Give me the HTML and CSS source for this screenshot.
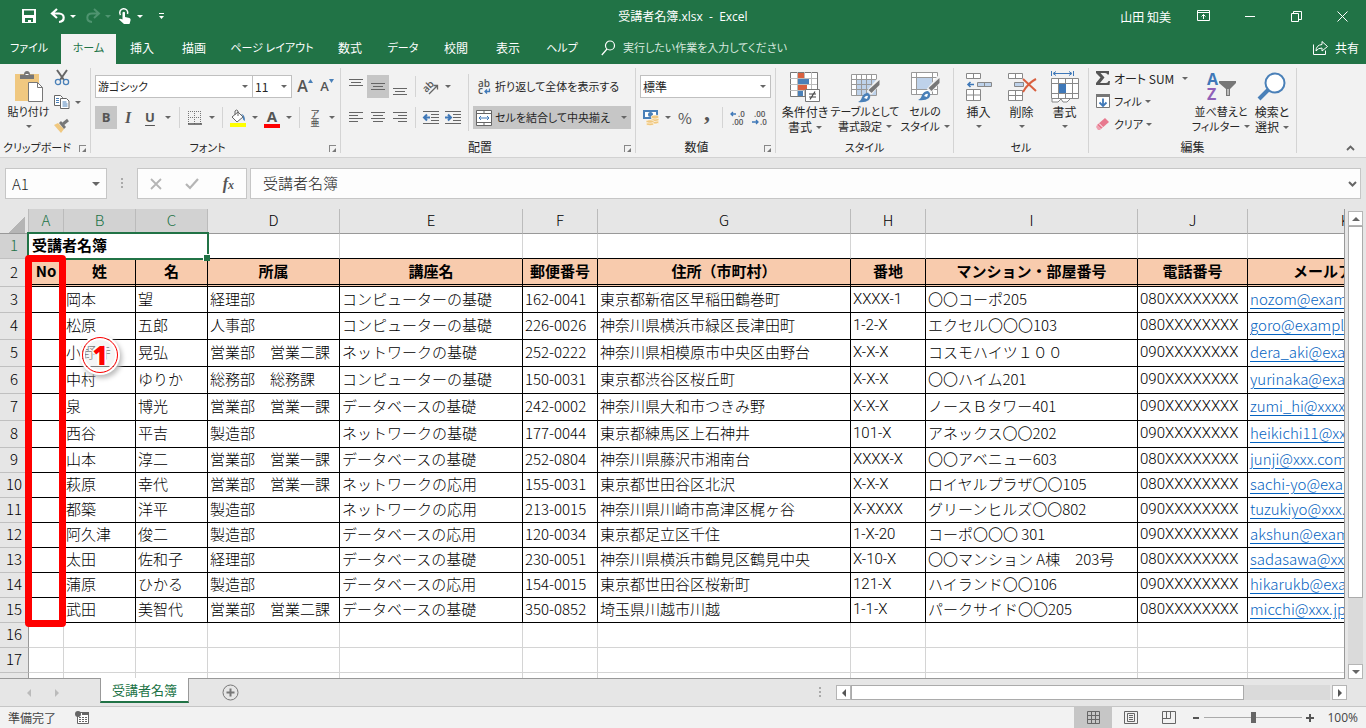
FILE: index.html
```
<!DOCTYPE html>
<html lang="ja">
<head>
<meta charset="utf-8">
<title>受講者名簿.xlsx - Excel</title>
<link rel="stylesheet" href="styles.css">
</head>
<body>
<div class="app">
<header class="titlebar">
  <div class="quick">
    <button class="q-save" aria-label="上書き保存"><svg width="16" height="16" viewBox="0 0 16 16"><path d="M1 1h14v14H1z" fill="#fff"/><path d="M3 2.500h10V7H3zM4 10h8v4h-2v-2H7v2H4z" fill="#217346"/></svg></button>
    <button class="q-undo" aria-label="元に戻す"><svg width="16" height="16" viewBox="0 0 16 16"><path d="M7 1L2 5.500l5 4.500M2.500 5.500H9c6 0 6.500 8 0 8.500" fill="none" stroke="#fff" stroke-width="2.200"/></svg></button>
    <span class="caret white"></span>
    <button class="q-redo" aria-label="やり直し"><svg width="16" height="16" viewBox="0 0 16 16"><path d="M9 1l5 4.500L9 10M13.500 5.500H7c-6 0-6.500 8 0 8.500" fill="none" stroke="#4f9470" stroke-width="2"/></svg></button>
    <span class="caret faded"></span>
    <button class="q-touch" aria-label="タッチ/マウス モードの切り替え"><svg width="14" height="18" viewBox="0 0 14 18"><path d="M2.500 8a4 4 0 1 1 7-1" fill="none" stroke="#fff" stroke-width="1.500"/><path d="M4.500 5.500q1.500-1.500 2.500 0V10l4.500 1q1.500.5 1 2.500l-1 3.500H6L1 12.500q.5-1.500 3.500 0z" fill="#fff"/></svg></button>
    <span class="caret white"></span>
    <button class="q-more" aria-label="クイック アクセス ツール バーのユーザー設定"><svg width="7" height="8" viewBox="0 0 7 8"><path d="M1 1.500h5" stroke="#fff"/><path d="M1 4h5L3.500 7z" fill="#fff"/></svg></button>
  </div>
  <div class="doc-title">受講者名簿.xlsx&nbsp; -&nbsp; Excel</div>
  <div class="window">
    <span class="user">山田 知美</span>
    <button aria-label="リボンの表示オプション"><svg width="14" height="12" viewBox="0 0 14 12" fill="none" stroke="#fff"><path d="M.5.5h12v10H.5zM.5 2.500h12M6.500 9V4.500M4.500 6.500l2-2 2 2"/></svg></button>
    <button aria-label="最小化"><svg width="11" height="11" viewBox="0 0 11 11"><path d="M0 5.500h10" stroke="#fff"/></svg></button>
    <button aria-label="元に戻す (縮小)"><svg width="11" height="11" viewBox="0 0 11 11" fill="none" stroke="#fff"><path d="M.5 2.500h7v8h-7zM2.500 2.500v-2h8v8h-3"/></svg></button>
    <button aria-label="閉じる"><svg width="11" height="11" viewBox="0 0 11 11"><path d="M.5.5l10 10M10.500.5l-10 10" stroke="#fff"/></svg></button>
  </div>
</header>

<nav class="tabs">
  <button class="t-file kana">ファイル</button><button class="active kana">ホーム</button><button>挿入</button><button>描画</button><button class="t-page kana">ページ レイアウト</button><button>数式</button><button class="t-data kana">データ</button><button>校閲</button><button>表示</button><button class="t-help kana">ヘルプ</button>
  <button class="tell kana"><svg width="15" height="16" viewBox="0 0 15 16" fill="none" stroke="#fff" stroke-width="1.200"><circle cx="9" cy="5.500" r="4.500"/><path d="M6 9L.8 15"/></svg>実行したい作業を入力してください</button>
  <button class="share"><svg width="16" height="15" viewBox="0 0 16 15" fill="none" stroke="#fff"><path d="M.5 4.500v10h12v-4M3 11q0-6 6-6.500v-3l5.500 5L9 11V8Q5 8 3 11z"/></svg>共有</button>
</nav>

<section class="ribbon">
  <div class="group g-clip">
    <div class="body">
      <button class="big paste"><svg width="30" height="32" viewBox="0 0 30 32"><path d="M1 3h24v27H1z" fill="#f0c880"/><path d="M6 8V3.500h4Q10 0 13 0t3 3.500h4V8z" fill="#777"/><path d="M11.500 3.500h3" stroke="#fff"/><path d="M14.500 11.500h9l5 5v14h-14z" fill="#fff" stroke="#777"/><path d="M23.500 11.500v5h5" fill="none" stroke="#777"/></svg><span class="kana">貼り付け</span><i class="caret"></i></button>
      <div class="clip-tools">
        <button aria-label="切り取り"><svg width="16" height="16" viewBox="0 0 16 16" fill="none"><path d="M3 0l7 10M13 0L6 10" stroke="#666" stroke-width="2"/><circle cx="4" cy="12" r="2.600" stroke="#4a80b8" stroke-width="1.300"/><circle cx="12" cy="12" r="2.600" stroke="#4a80b8" stroke-width="1.300"/></svg></button>
        <div class="copy-row"><button aria-label="コピー"><svg width="16" height="14" viewBox="0 0 16 14" fill="#fff" stroke="#666"><path d="M.5.5h6l2 2v8h-8z"/><path d="M6.500 3.500h6l2.500 2.500v7.500H6.500z"/><path d="M2 3.500h3M2 5.500h3M2 7.500h3M8.500 7h4M8.500 9h5M8.500 11h5" stroke="#4a80b8"/></svg></button><i class="caret"></i></div>
        <button aria-label="書式のコピー/貼り付け"><svg width="16" height="14" viewBox="0 0 16 14"><path d="M0 6l4-2 6 6-3 4z" fill="#f0c880"/><path d="M5 4l5 6 2-2-5-6z" fill="#777"/><path d="M9 5l5-4" stroke="#777" stroke-width="3"/></svg></button>
      </div>
    </div>
    <div class="caption kana">クリップボード<span class="launch"></span></div>
  </div>

  <div class="group g-font">
    <div class="body rows">
      <div class="row">
        <div class="combo font-name kana"><select aria-label="フォント"><option>游ゴシック</option></select></div><div class="combo font-size"><select aria-label="フォント サイズ"><option>11</option></select></div>
        <button class="w22 letter grow" aria-label="フォント サイズの拡大">A<svg width="5" height="4" viewBox="0 0 5 4"><path d="M0 4h5L2.500 0z" fill="#4a80b8"/></svg></button><button class="w22 letter shrink" aria-label="フォント サイズの縮小">A<svg width="5" height="4" viewBox="0 0 5 4"><path d="M0 0h5L2.500 4z" fill="#4a80b8"/></svg></button>
      </div>
      <div class="row">
        <button class="w22 on letter">B</button><button class="w22 letter italic">I</button><button class="w22 letter under">U</button><span class="cw first"><i class="caret"></i></span>
        <i class="sep"></i>
        <button class="w22" aria-label="罫線"><svg width="14" height="14" viewBox="0 0 14 14" fill="none" stroke="#777"><path d="M.5 0v13M6.500 0v13M12.500 0v13M0 .5h13M0 6.500h13" stroke-dasharray="1 1"/><path d="M0 13h14" stroke="#555" stroke-width="1.500"/></svg></button><span class="cw"><i class="caret"></i></span>
        <i class="sep"></i>
        <button class="w22" aria-label="塗りつぶしの色"><svg width="18" height="18" viewBox="0 0 18 18"><path d="M3 8l6-5 5 5-6 5z" fill="#fff" stroke="#666"/><path d="M6 6V2q1.500-2 3 0v5" fill="none" stroke="#666"/><path d="M12 5q4 0 4 7-3-1-2-5z" fill="#4a80b8"/><path d="M1 14h16v4H1z" fill="#ff0"/></svg></button><span class="cw"><i class="caret"></i></span>
        <button class="w22 font-color letter" aria-label="フォントの色">A</button><span class="cw"><i class="caret"></i></span>
        <i class="sep"></i>
        <button class="w22 ruby"><span>ア</span><span>亜</span></button><span class="cw"><i class="caret"></i></span>
      </div>
    </div>
    <div class="caption kana">フォント<span class="launch"></span></div>
  </div>

  <div class="group g-align">
    <div class="body">
      <div class="rows">
        <div class="row">
          <button class="w22" aria-label="上揃え"><svg width="14" height="16" viewBox="0 0 14 16" stroke="#666"><path d="M0 .5h14M2 3.500h10M0 6.500h14"/></svg></button><button class="w22 on" aria-label="上下中央揃え"><svg width="14" height="16" viewBox="0 0 14 16" stroke="#666"><path d="M0 4.500h14M2 7.500h10M0 10.500h14"/></svg></button><button class="w22" aria-label="下揃え"><svg width="14" height="16" viewBox="0 0 14 16" stroke="#666"><path d="M0 9.500h14M2 12.500h10M0 15.500h14"/></svg></button>
          <i class="sep"></i>
          <button class="w22" aria-label="方向"><svg width="18" height="16" viewBox="0 0 18 16"><text x="0" y="10" transform="rotate(-45 7 7)" class="glyph">ab</text><path d="M7 15l8-8M11.500 6.500h4v4" fill="none" stroke="#666" stroke-width="1.300"/></svg></button><span class="cw"><i class="caret"></i></span>
        </div>
        <div class="row">
          <button class="w22" aria-label="左揃え"><svg width="14" height="12" viewBox="0 0 14 12" stroke="#666"><path d="M0 .5h14M0 3.500h9M0 6.500h14M0 9.500h9"/></svg></button><button class="w22" aria-label="中央揃え"><svg width="14" height="12" viewBox="0 0 14 12" stroke="#666"><path d="M0 .5h14M2 3.500h10M0 6.500h14M2 9.500h10"/></svg></button><button class="w22" aria-label="右揃え"><svg width="14" height="12" viewBox="0 0 14 12" stroke="#666"><path d="M0 .5h14M5 3.500h9M0 6.500h14M5 9.500h9"/></svg></button>
          <i class="sep"></i>
          <button class="w22" aria-label="インデントを減らす"><svg width="16" height="14" viewBox="0 0 16 14" fill="none" stroke="#666"><path d="M0 .5h16M8 3.500h8M8 6.500h8M8 9.500h8M0 12.500h16"/><path d="M7 6.500H1M4 3.500l-3 3 3 3" stroke="#3f78b8" stroke-width="2"/></svg></button><button class="w22" aria-label="インデントを増やす"><svg width="16" height="14" viewBox="0 0 16 14" fill="none" stroke="#666"><path d="M0 .5h16M8 3.500h8M8 6.500h8M8 9.500h8M0 12.500h16"/><path d="M0 6.500h6M3 3.500l3 3-3 3" stroke="#3f78b8" stroke-width="2"/></svg></button>
        </div>
      </div>
      <i class="sep tall"></i>
      <div class="rows wide">
        <button class="row text-btn kana"><svg width="16" height="16" viewBox="0 0 16 16"><text x="2" y="8" class="glyph">ab</text><text x="2" y="15" class="glyph">c</text><path d="M13.500 9.500v3H9M11 10.500l-2 2 2 2" fill="none" stroke="#3f78b8" stroke-width="1.300"/></svg>折り返して全体を表示する</button>
        <button class="row text-btn kana on"><svg width="16" height="16" viewBox="0 0 16 16" fill="#fff" stroke="#666"><path d="M.5.5h15v15H.5zM8 .5v3M8 12.500v3M.5 3.500h15M.5 12.500h15"/><path d="M3 8h10M5 6L3 8l2 2M11 6l2 2-2 2" fill="none" stroke="#3f78b8"/></svg>セルを結合して中央揃え<i class="caret"></i></button>
      </div>
    </div>
    <div class="caption">配置<span class="launch"></span></div>
  </div>

  <div class="group g-num">
    <div class="body rows">
      <div class="combo number-format"><select aria-label="表示形式"><option>標準</option></select></div>
      <div class="row">
        <button class="w22" aria-label="通貨表示形式"><svg width="18" height="17" viewBox="0 0 18 17"><path d="M1 1h15v9H1z" fill="#4a80b8"/><path d="M3 3h11v5H3z" fill="#fff"/><circle cx="8.500" cy="5.500" r="2.500" fill="#4a80b8"/><g fill="#f0c880" stroke="#fff" stroke-width=".6"><ellipse cx="13" cy="13" rx="4" ry="2"/><ellipse cx="13" cy="10.500" rx="4" ry="2"/><ellipse cx="13" cy="8" rx="4" ry="2"/><ellipse cx="8" cy="15" rx="4" ry="1.700"/><ellipse cx="8" cy="12.500" rx="4" ry="1.700"/></g></svg></button><span class="cw"><i class="caret"></i></span><button class="w22 pct">%</button><button class="w22 comma">,</button>
        <i class="sep"></i>
        <button class="w22" aria-label="小数点以下の表示桁数を増やす"><svg width="16" height="16" viewBox="0 0 16 16"><text x="8" y="7" class="dec">.0</text><text x="2" y="15" class="dec">.00</text><path d="M6 4H1M3 2L1 4l2 2" fill="none" stroke="#3f78b8" stroke-width="1.300"/></svg></button><button class="w22" aria-label="小数点以下の表示桁数を減らす"><svg width="16" height="16" viewBox="0 0 16 16"><text x="2" y="7" class="dec">.00</text><text x="8" y="15" class="dec">.0</text><path d="M0 12h6M4 10l2 2-2 2" fill="none" stroke="#3f78b8" stroke-width="1.300"/></svg></button>
      </div>
    </div>
    <div class="caption">数値<span class="launch"></span></div>
  </div>

  <div class="group g-style">
    <div class="body">
      <button class="big"><svg width="32" height="32" viewBox="0 0 32 32"><path d="M1.500 1.500h27v24h-27z" fill="#fff" stroke="#777"/><path d="M8.500 1v24M15.500 1v24M22.500 1v24M1 7.500h27M1 13.500h27M1 19.500h27" stroke="#bbb"/><path d="M9 2h6v5H9zM9 14h9v5H9z" fill="#d9603f"/><path d="M9 8h11v5H9zM9 20h5v5H9z" fill="#4a80b8"/><path d="M16.500 18.500h14v12h-14z" fill="#fff" stroke="#777"/><path d="M20 23h7M20 26h7M26 20.500l-5 8" stroke="#444" stroke-width="1.200"/></svg><span>条件付き<br>書式<i class="caret"></i></span></button>
      <button class="big b64"><svg width="32" height="32" viewBox="0 0 32 32"><path d="M2.500 3.500h25v21h-25z" fill="#fff"/><path d="M8 9h19v15H8z" fill="#bed2ea"/><path d="M2.500 3.500h25v21h-25zM7.500 3v22M12.500 3v22M17.500 3v22M22.500 3v22M2 8.500h26M2 13.500h26M2 18.500h26" fill="none" stroke="#999"/><path d="M31 9L20 22" stroke="#f2f2f2" stroke-width="6"/><path d="M30.500 9v5l-8 8-3-3z" fill="#777"/><path d="M9 31q3-1 4-5 2-4 6-4 4 3 1 7-4 3-11 2z" fill="#4a80b8"/><path d="M15 27q2-3 4-2l-1 3z" fill="#fff"/></svg><span class="kana">テーブルとして<br>書式設定<i class="caret"></i></span></button>
      <button class="big"><svg width="32" height="32" viewBox="0 0 32 32"><path d="M2.500 1.500h26v22h-26z" fill="#fff"/><path d="M8 7h15v11H8z" fill="#bed2ea"/><path d="M2.500 1.500h26v22h-26zM7.500 1v22M23.500 1v22M2 6.500h27M2 18.500h27" fill="none" stroke="#999"/><path d="M31 7L20 20" stroke="#f2f2f2" stroke-width="6"/><path d="M30.500 7v5l-8 8-3-3z" fill="#777"/><path d="M9 29q3-1 4-5 2-4 6-4 4 3 1 7-4 3-11 2z" fill="#4a80b8"/><path d="M15 25q2-3 4-2l-1 3z" fill="#fff"/></svg><span class="kana">セルの<br>スタイル<i class="caret"></i></span></button>
    </div>
    <div class="caption kana">スタイル</div>
  </div>

  <div class="group g-cell">
    <div class="body">
      <button class="big"><svg width="28" height="32" viewBox="0 0 28 32" fill="#fff" stroke="#888"><path d="M1.500 2.500h14v5h-14zM8.500 2.500v5M1.500 18.500h14v11h-14zM8.500 18.500v11M1.500 24h14"/><path d="M12.500 11.500h14v4h-14zM19.500 11.500v4" fill="#bed2ea"/><path d="M9 13.500H3M5.500 11L3 13.500 5.500 16" fill="none" stroke="#3f78b8" stroke-width="1.600"/></svg><span>挿入</span><i class="caret"></i></button>
      <button class="big"><svg width="30" height="32" viewBox="0 0 30 32" fill="#fff" stroke="#888"><path d="M1.500 2.500h14v5h-14zM8.500 2.500v5M1.500 19.500h14v10h-14zM8.500 19.500v10M1.500 24.500h14"/><path d="M7.500 11.500h9v4h-9z" fill="#bed2ea"/><path d="M16 8l13 12M29 8Q21 12 16 21" fill="none" stroke="#d9603f" stroke-width="2"/></svg><span>削除</span><i class="caret"></i></button>
      <button class="big"><svg width="28" height="32" viewBox="0 0 28 32" fill="#fff" stroke="#888"><path d="M.5 7.500h27v20h-27zM7.500 7.500v20M14.500 7.500v20M21.500 7.500v20M.5 12.500h27M.5 22.500h27"/><path d="M1 28v3h6l3-3 2 3h4l3-3"/><path d="M8 13h7v9H8z" fill="#3f78b8" stroke="none"/><path d="M.5 0v5M22.500 0v5M3 2.500h17M5 .5l-3 2 3 2M18 .5l3 2-3 2" fill="none" stroke="#3f78b8"/></svg><span>書式</span><i class="caret"></i></button>
    </div>
    <div class="caption kana">セル</div>
  </div>

  <div class="group g-edit">
    <div class="body">
      <div class="edit-tools">
        <button><svg width="16" height="16" viewBox="0 0 16 16"><path d="M1 1h13v3.500h-1.500Q12 3 10 3H5.500l4 4.500L5 13h6q2 0 2.500-2H15l-.5 4H1v-2l4.500-5.500L1 3z" fill="#555"/></svg>オート SUM<i class="caret sum"></i></button>
        <button class="kana"><svg width="16" height="16" viewBox="0 0 16 16"><path d="M1.500 1.500h13v13h-13z" fill="#fff" stroke="#777"/><path d="M1 1h14v3H1z" fill="#777"/><path d="M8 5.500v7M4.500 9.500L8 13l3.500-3.500" fill="none" stroke="#3f78b8" stroke-width="1.800"/></svg>フィル<i class="caret"></i></button>
        <button class="kana"><svg width="16" height="16" viewBox="0 0 16 16"><path d="M2 9l8-7 4 4-8 7z" fill="#e8788e"/><path d="M2 9l4 4-1 1H3L1 11z" fill="#f0a0b0"/><path d="M4 7.500l4 4" stroke="#fff"/></svg>クリア<i class="caret"></i></button>
      </div>
      <button class="big"><svg width="32" height="32" viewBox="0 0 32 32"><text x="2" y="14" class="az a">A</text><text x="2" y="29" class="az z">Z</text><path d="M14 10h17v2l-6 6v7h-4v-7l-7-6z" fill="#777"/><path d="M23 18v6" stroke="#fff"/></svg><span class="kana">並べ替えと<br>フィルター<i class="caret"></i></span></button>
      <button class="big find"><svg width="32" height="32" viewBox="0 0 32 32"><path d="M13 18L3 28" stroke="#4a80b8" stroke-width="4"/><circle cx="19" cy="12" r="9.500" fill="#fff" stroke="#4a80b8" stroke-width="2"/></svg><span>検索と<br>選択<i class="caret"></i></span></button>
    </div>
    <div class="caption">編集</div>
  </div>
  <button class="collapse" aria-label="リボンを折りたたむ"><svg width="9" height="6" viewBox="0 0 9 6"><path d="M1 5l3.500-3.500L8 5" fill="none" stroke="#666" stroke-width="1.800"/></svg></button>
</section>

<section class="formula">
  <div class="namebox"><input aria-label="名前ボックス" value="A1"><i class="caret"></i></div>
  <span class="dots"></span>
  <div class="fx">
    <button aria-label="キャンセル"><svg width="12" height="12" viewBox="0 0 12 12"><path d="M1 1l10 10M11 1L1 11" stroke="#b5b5b5" stroke-width="1.800"/></svg></button>
    <button aria-label="入力"><svg width="14" height="12" viewBox="0 0 14 12"><path d="M1 6l4 4 8-9" fill="none" stroke="#b5b5b5" stroke-width="2.200"/></svg></button>
    <button class="fn" aria-label="関数の挿入">f<small>x</small></button>
  </div>
  <div class="entry"><input aria-label="数式バー" value="受講者名簿"><svg width="9" height="6" viewBox="0 0 9 6"><path d="M1 1l3.500 3.500L8 1" fill="none" stroke="#666" stroke-width="2"/></svg></div>
</section>

<main class="sheet">
  <div class="view">
    <table>
      <colgroup><col class="c-rh"><col class="c-a"><col class="c-b"><col class="c-b"><col class="c-d"><col class="c-e"><col class="c-f"><col class="c-g"><col class="c-f"><col class="c-i"><col class="c-j"><col class="c-k"></colgroup>
      <thead><tr><th class="corner"></th><th class="sel">A</th><th class="sel">B</th><th class="sel">C</th><th>D</th><th>E</th><th>F</th><th>G</th><th>H</th><th>I</th><th>J</th><th>K</th></tr></thead>
      <tbody>
        <tr class="r1"><th class="sel">1</th><td colspan="3">受講者名簿</td><td></td><td></td><td></td><td></td><td></td><td></td><td></td><td></td></tr>
        <tr class="head"><th>2</th><td>No</td><td>姓</td><td>名</td><td>所属</td><td>講座名</td><td>郵便番号</td><td>住所（市町村）</td><td>番地</td><td>マンション・部屋番号</td><td>電話番号</td><td>メールアドレス</td></tr>
        <tr class="data first"><th>3</th><td></td><td>岡本</td><td>望</td><td>経理部</td><td>コンピューターの基礎</td><td>162-0041</td><td>東京都新宿区早稲田鶴巻町</td><td>XXXX-1</td><td>〇〇コーポ205</td><td>080XXXXXXXX</td><td><a href="#">nozom@example.com</a></td></tr>
        <tr class="data tall"><th>4</th><td></td><td>松原</td><td>五郎</td><td>人事部</td><td>コンピューターの基礎</td><td>226-0026</td><td>神奈川県横浜市緑区長津田町</td><td>1-2-X</td><td>エクセル〇〇〇103</td><td>080XXXXXXXX</td><td><a href="#">goro@example.com</a></td></tr>
        <tr class="data tall"><th>5</th><td></td><td>小野寺</td><td>晃弘</td><td>営業部　営業二課</td><td>ネットワークの基礎</td><td>252-0222</td><td>神奈川県相模原市中央区由野台</td><td>X-X-X</td><td>コスモハイツ１００</td><td>090XXXXXXXX</td><td><a href="#">dera_aki@example.com</a></td></tr>
        <tr class="data tall"><th>6</th><td></td><td>中村</td><td>ゆりか</td><td>総務部　総務課</td><td>コンピューターの基礎</td><td>150-0031</td><td>東京都渋谷区桜丘町</td><td>X-X-X</td><td>〇〇ハイム201</td><td>090XXXXXXXX</td><td><a href="#">yurinaka@example.com</a></td></tr>
        <tr class="data tall"><th>7</th><td></td><td>泉</td><td>博光</td><td>営業部　営業一課</td><td>データベースの基礎</td><td>242-0002</td><td>神奈川県大和市つきみ野</td><td>X-X-X</td><td>ノースＢタワー401</td><td>090XXXXXXXX</td><td><a href="#">zumi_hi@xxxx.jp</a></td></tr>
        <tr class="data tall"><th>8</th><td></td><td>西谷</td><td>平吉</td><td>製造部</td><td>ネットワークの基礎</td><td>177-0044</td><td>東京都練馬区上石神井</td><td>101-X</td><td>アネックス〇〇202</td><td>090XXXXXXXX</td><td><a href="#">heikichi11@xxx.jp</a></td></tr>
        <tr class="data"><th>9</th><td></td><td>山本</td><td>淳二</td><td>営業部　営業一課</td><td>データベースの基礎</td><td>252-0804</td><td>神奈川県藤沢市湘南台</td><td>XXXX-X</td><td>〇〇アベニュー603</td><td>080XXXXXXXX</td><td><a href="#">junji@xxx.com</a></td></tr>
        <tr class="data"><th>10</th><td></td><td>萩原</td><td>幸代</td><td>営業部　営業一課</td><td>ネットワークの応用</td><td>155-0031</td><td>東京都世田谷区北沢</td><td>X-X-X</td><td>ロイヤルプラザ〇〇105</td><td>080XXXXXXXX</td><td><a href="#">sachi-yo@example.com</a></td></tr>
        <tr class="data"><th>11</th><td></td><td>都築</td><td>洋平</td><td>製造部</td><td>ネットワークの応用</td><td>213-0015</td><td>神奈川県川崎市高津区梶ヶ谷</td><td>X-XXXX</td><td>グリーンヒルズ〇〇802</td><td>090XXXXXXXX</td><td><a href="#">tuzukiyo@xxx.jp</a></td></tr>
        <tr class="data"><th>12</th><td></td><td>阿久津</td><td>俊二</td><td>製造部</td><td>データベースの応用</td><td>120-0034</td><td>東京都足立区千住</td><td>1-X-20</td><td>コーポ〇〇〇 301</td><td>090XXXXXXXX</td><td><a href="#">akshun@example.com</a></td></tr>
        <tr class="data"><th>13</th><td></td><td>太田</td><td>佐和子</td><td>経理部</td><td>データベースの基礎</td><td>230-0051</td><td>神奈川県横浜市鶴見区鶴見中央</td><td>X-10-X</td><td>〇〇マンション A棟　203号</td><td>080XXXXXXXX</td><td><a href="#">sadasawa@xxx.com</a></td></tr>
        <tr class="data"><th>14</th><td></td><td>蒲原</td><td>ひかる</td><td>製造部</td><td>データベースの応用</td><td>154-0015</td><td>東京都世田谷区桜新町</td><td>121-X</td><td>ハイランド〇〇106</td><td>090XXXXXXXX</td><td><a href="#">hikarukb@example.com</a></td></tr>
        <tr class="data"><th>15</th><td></td><td>武田</td><td>美智代</td><td>営業部　営業二課</td><td>データベースの基礎</td><td>350-0852</td><td>埼玉県川越市川越</td><td>1-1-X</td><td>パークサイド〇〇205</td><td>080XXXXXXXX</td><td><a href="#">micchi@xxx.jp</a></td></tr>
        <tr><th>16</th><td></td><td></td><td></td><td></td><td></td><td></td><td></td><td></td><td></td><td></td><td></td></tr>
        <tr><th>17</th><td></td><td></td><td></td><td></td><td></td><td></td><td></td><td></td><td></td><td></td><td></td></tr>
        <tr><th></th><td></td><td></td><td></td><td></td><td></td><td></td><td></td><td></td><td></td><td></td><td></td></tr>
      </tbody>
    </table>
    <div class="selection"></div>
    <div class="mark"></div>
    <div class="badge">1</div>
  </div>
  <div class="vscroll">
    <button aria-label="上へスクロール"><i class="up"></i></button>
    <div class="vtrack"><div class="vthumb"></div></div>
    <button aria-label="下へスクロール"><i class="down"></i></button>
  </div>
</main>

<section class="sheetbar">
  <button class="nav" aria-label="前のシート"><i class="left"></i></button>
  <button class="nav" aria-label="次のシート"><i class="right"></i></button>
  <button class="sheet-tab">受講者名簿</button>
  <button class="add" aria-label="新しいシート"><svg width="17" height="17" viewBox="0 0 17 17" fill="none" stroke="#777"><circle cx="8.500" cy="8.500" r="7.500"/><path d="M8.500 4.500v8M4.500 8.500h8" stroke-width="2"/></svg></button>
  <div class="hscroll">
    <span class="dots"></span>
    <button aria-label="左へスクロール"><i class="left"></i></button>
    <div class="htrack"><div class="hthumb"></div></div>
    <button aria-label="右へスクロール"><i class="right"></i></button>
  </div>
</section>

<footer class="status">
  <span>準備完了</span>
  <svg class="macro" width="14" height="13" viewBox="0 0 14 13"><path d="M2.500 1.500h11v11h-11z" fill="#fff" stroke="#666"/><path d="M7 1h7v3H7z" fill="#666"/><circle cx="3" cy="3" r="3" fill="#666"/><path d="M4 6.500h8M4 8.500h8M4 10.500h8" stroke="#666" stroke-dasharray="2 1"/></svg>
  <div class="views">
    <button class="on" aria-label="標準"><svg width="13" height="13" viewBox="0 0 13 13" fill="none" stroke="#666"><path d="M.5.5h12v12H.5zM4.500.5v12M8.500.5v12M.5 4.500h12M.5 8.500h12"/></svg></button>
    <button aria-label="ページ レイアウト"><svg width="14" height="13" viewBox="0 0 14 13" fill="none" stroke="#666"><path d="M.5.5h13v12H.5zM3.500 2.500h7v8h-7zM5 4.500h4M5 6.500h4M5 8.500h4"/></svg></button>
    <button aria-label="改ページ プレビュー"><svg width="14" height="13" viewBox="0 0 14 13" fill="none" stroke="#666"><path d="M.5.5h13v12H.5zM.5 7.500h8v-7M4.500.5v7"/></svg></button>
  </div>
  <button class="zoom-btn" aria-label="縮小"><svg width="8" height="8" viewBox="0 0 8 8"><path d="M1 4h6" stroke="#555" stroke-width="2"/></svg></button>
  <input class="zoom" type="range" min="10" max="190" value="100" aria-label="ズーム">
  <button class="zoom-btn" aria-label="拡大"><svg width="8" height="8" viewBox="0 0 8 8"><path d="M0 4h8M4 0v8" stroke="#555" stroke-width="2"/></svg></button>
  <span class="pct-label">100%</span>
</footer>
</div>
</body>
</html>
```
FILE: styles.css
```
* { box-sizing: border-box; }
body { margin: 0; font: 12px/15px "Noto Sans CJK JP", sans-serif; font-feature-settings: "palt"; color: #262626; }
button { border: 0; padding: 0; background: none; font: inherit; font-feature-settings: inherit; color: inherit; display: flex; align-items: center; justify-content: center; white-space: nowrap; flex: none; }
input, select { font: inherit; font-feature-settings: inherit; color: inherit; border: 0; background: none; padding: 0; min-width: 0; outline: 0; }
svg { flex: none; display: block; overflow: visible; }
i { flex: none; }
.app { display: flex; flex-direction: column; height: 100vh; overflow: hidden; background: #e6e6e6; }
.kana { font-size: 11px; }

.caret { display: inline-block; border: 3px solid transparent; border-top-color: #666; border-bottom: 0; }
.caret.white { border-top-color: #fff; }
.caret.faded { border-top-color: #4f9470; }

/* title bar */
.titlebar { display: grid; grid-template-columns: 1fr auto 1fr; align-items: center; height: 34px; padding-bottom: 2px; background: #217346; color: #fff; flex: none; }
.doc-title { font-family: "Open Sans", "Noto Sans CJK JP", sans-serif; }
.quick { display: flex; align-items: center; padding-left: 21px; }
.q-undo { margin-left: 13px; }
.quick .caret { margin-left: 4px; }
.q-redo { margin-left: 9px; }
.q-touch { margin-left: 7px; }
.quick .q-touch + .caret { margin-left: 5px; }
.q-more { margin-left: 15px; }
.window { display: flex; align-items: center; justify-content: flex-end; padding-right: 1px; }
.window button { width: 46px; height: 30px; }
.user { margin-right: 10px; }

/* ribbon tabs */
.tabs { display: flex; height: 30px; background: #217346; color: #fff; flex: none; }
.tabs button { width: 52px; padding-bottom: 3px; }
.tabs .active { width: 55px; background: #f2f2f2; color: #217346; }
.tabs .t-file { width: 61px; padding-right: 3px; }
.tabs .t-page { width: 104px; }
.tabs .t-data { width: 54px; }
.tabs .t-help { width: 56px; }
.tabs .tell { width: auto; margin-left: 11px; gap: 7px; color: #d8e8df; }
.tabs .share { width: auto; margin-left: auto; padding-right: 7px; gap: 6px; }

/* ribbon */
.ribbon { display: flex; height: 94px; padding: 4px 0; background: #f2f2f2; border-bottom: 1px solid #d2d2d2; flex: none; }
.group { display: flex; flex-direction: column; border-right: 1px solid #d4d4d4; flex: none; }
.body { display: flex; flex: 1; }
.caption { position: relative; height: 17px; line-height: 20px; text-align: center; margin-bottom: -1px; }
.launch { position: absolute; right: 4px; bottom: 2px; width: 7px; height: 7px; border: 1px solid #888; border-right: 0; border-bottom: 0; }
.launch::after { content: ""; position: absolute; left: 2px; top: 2px; border: 2px solid #777; border-top-color: transparent; border-left-color: transparent; }
.rows { display: flex; flex-direction: column; gap: 8px; padding-top: 7px; }
.row { display: flex; align-items: center; height: 23px; }
.w22 { width: 22px; height: 23px; }
.on { background: #c6c6c6; }
.cw { width: 12px; display: flex; justify-content: center; }
.cw.first { width: 14px; }
.sep { width: 1px; height: 21px; background: #d4d4d4; margin: 0 4px; }
.sep.tall { height: 57px; margin: 6px 4px 0; }
.combo { position: relative; height: 23px; border: 1px solid #c0c0c0; background: #fff; }
.combo::after { content: ""; position: absolute; right: 4px; top: 9px; border: 3px solid transparent; border-top-color: #666; border-bottom: 0; pointer-events: none; }
.combo select { appearance: none; width: 100%; height: 21px; padding-left: 2px; }
.font-name { width: 158px; }
.font-size { width: 40px; margin-left: -1px; }
.number-format { width: 131px; }
.letter { font-family: "Open Sans", sans-serif; font-weight: 700; font-size: 13px; color: #555; }
.grow, .shrink { font-weight: 600; }
.grow { font-size: 16px; margin-left: 2px; }
.grow svg, .shrink svg { align-self: flex-start; margin-top: 4px; }
.italic { font-family: "Liberation Serif", serif; font-style: italic; font-size: 16px; }
.under { text-decoration: underline; text-underline-offset: 3px; }
.font-color { background: linear-gradient(#f00, #f00) 3px 18px / 16px 4px no-repeat; font-size: 15px; line-height: 16px; padding-bottom: 3px; }
.ruby { flex-direction: column; font-size: 9px; line-height: 9px; font-weight: 500; color: #555; }
.glyph { font: 600 10px/8px "Open Sans", sans-serif; fill: #555; }
.dec { font: 600 8px/8px "Open Sans", sans-serif; fill: #555; }
.az { font: 700 16px/16px "Open Sans", sans-serif; }
.az.a { fill: #3f78b8; }
.az.z { fill: #9060b8; }
.big { flex-direction: column; justify-content: flex-start; width: 58px; padding-top: 3px; line-height: 15px; }
.big svg { margin-bottom: 1px; }
.big > .caret { margin-top: 6px; }
.big span .caret { margin-left: 4px; vertical-align: 3px; }
.b64 { width: 62px; }

.g-clip { width: 91px; }
.g-clip .body { padding-left: 3px; }
.g-clip .caption { padding-right: 16px; }
.big.paste { width: 51px; }
.clip-tools { display: flex; flex-direction: column; align-items: flex-start; gap: 8px; padding-top: 2px; }
.clip-tools button { height: 16px; }
.copy-row { display: flex; align-items: center; gap: 5px; }
.g-font { width: 250px; }
.g-font .body, .g-num .body { padding-left: 4px; }
.g-font .caption { padding-right: 16px; }
.g-align { width: 295px; }
.g-align .body { padding-left: 4px; }
.wide { flex: 1; padding-right: 4px; }
.text-btn { justify-content: flex-start; gap: 3px; padding-left: 3px; }
.text-btn .caret { margin-left: auto; margin-right: 4px; }
.g-align .caption { padding-right: 16px; }
.g-num { width: 140px; }
.g-num .caption { padding-right: 18px; }
.pct { font-size: 15px; color: #555; }
.comma { font: 700 24px/10px "Liberation Serif", serif; color: #555; padding-bottom: 12px; }
.g-style { width: 178px; }
.g-cell { width: 135px; }
.g-cell .body { padding-left: 3px; }
.g-cell .big { width: 43px; }
.g-edit { width: 208px; }
.edit-tools { display: flex; flex-direction: column; gap: 7px; width: 102px; padding: 2px 0 0 6px; }
.edit-tools button { height: 16px; justify-content: flex-start; gap: 3px; }
.edit-tools .sum { margin-left: 5px; }
.g-edit .big { width: 60px; }
.g-edit .find { width: 42px; }
.collapse { margin: auto 11px 2px auto; }

/* formula bar */
.formula { display: flex; align-items: center; height: 51px; padding: 0 5px; flex: none; font: 300 15px/20px "Noto Sans CJK JP", sans-serif; color: #262626; }
.namebox, .fx, .entry { display: flex; align-items: center; height: 31px; background: #fdfdfd; border: 1px solid #c6c6c6; }
.namebox { width: 102px; padding: 0 6px; }
.namebox input { width: 84px; flex: 1; }
.namebox .caret { border-width: 4px 4px 0; }
.dots { width: 2px; height: 11px; margin: 0 14px; background: repeating-linear-gradient(#aaa 0 2px, transparent 2px 4px); }
.fx { width: 110px; justify-content: space-between; padding: 0 12px; }
.fn { font: italic 700 16px "Liberation Serif", serif; color: #555; }
.fn small { font-size: 12px; padding-top: 4px; }
.entry { flex: 1; margin-left: 3px; padding: 0 3px 0 12px; }
.entry input { flex: 1; height: 29px; padding-bottom: 2px; }

/* grid */
.sheet { display: flex; flex: 1; min-height: 0; }
.view { position: relative; flex: 1; overflow: hidden; border-right: 1px solid #999; border-bottom: 1px solid #999; background: #fff; }
table { border-spacing: 0; table-layout: fixed; width: 1444px; font: 15px/20px "Noto Sans CJK JP", sans-serif; font-feature-settings: normal; color: #000; }
.c-rh { width: 29px; } .c-a { width: 35px; } .c-b { width: 72px; } .c-d { width: 132px; } .c-e { width: 183px; } .c-f { width: 75px; }
.c-g { width: 253px; } .c-i { width: 212px; } .c-j { width: 110px; } .c-k { width: 196px; }
th, td { height: 25px; padding: 0 0 2px 2px; white-space: nowrap; border-right: 1px solid #d4d4d4; border-bottom: 1px solid #d4d4d4; font-weight: 300; text-align: left; overflow: hidden; }
th { background: #e6e6e6; text-align: center; padding: 0 0 2px; color: #000; border-right-color: #999; border-bottom-color: #c0c0c0; }
thead th { border-bottom-color: #999; border-right-color: #bbb; }
th.sel { background: #d2d2d2; color: #217346; }
thead th.corner { background: linear-gradient(135deg, #e6e6e6 50%, #b5b5b5 50%) 8px 7px / 17px 17px no-repeat #e6e6e6; }
.r1 td { border-bottom-color: #000; font-weight: 700; padding-left: 3px; }
.head td { height: 28px; background: #f8cbad; font-weight: 700; text-align: center; border-right-color: #000; border-bottom: 3px double #000; padding: 0 0 2px; }
.data td { border-color: #000; }
.data.first td { height: 26px; }
.data.tall td { height: 27px; }
.data td:nth-child(9), .data td:nth-child(11) { font-family: Roboto, sans-serif; }
td a { color: #0563c1; text-underline-offset: 3px; }
.selection { position: absolute; left: 27px; top: 23px; width: 182px; height: 28px; border: 2px solid #217346; }
.selection::after { content: ""; position: absolute; right: -3px; bottom: -3px; width: 6px; height: 6px; background: #217346; border: solid #fff; border-width: 1px 0 0 1px; }
.mark { position: absolute; left: 25px; top: 46px; width: 41px; height: 372px; border: 7px solid #f00; border-radius: 4px; }
.badge { position: absolute; left: 82px; top: 128px; width: 36px; height: 36px; border: 1px solid #f00; border-radius: 50%; background: rgba(235, 235, 235, .5); box-shadow: 0 0 0 2px #fff, 2px 3px 5px 2px #bbb, inset 0 0 0 2px #fff; font: 800 26px/34px "Open Sans", sans-serif; color: #f00; text-align: center; text-shadow: 0 0 2px #fff, 2px 0 1px #fff, -2px 0 1px #fff; }

/* scroll bars */
.vscroll { display: flex; flex-direction: column; width: 21px; padding: 2px 2px 0 3px; }
.vscroll button, .hscroll button { width: 15px; height: 15px; background: #fff; border: 1px solid #b5b5b5; }
.vtrack { flex: 1; background: #dadada; width: 15px; }
.vthumb { height: 85%; background: #fff; border: 1px solid #ababab; }
.up, .down { border: 4px solid transparent; }
.up { border-bottom-color: #666; border-top: 0; }
.down { border-top-color: #666; border-bottom: 0; }
.left, .right { border: 4px solid transparent; }
.left { border-right-color: #555; border-left: 0; }
.right { border-left-color: #555; border-right: 0; }
.nav .left { border-right-color: #bbb; }
.nav .right { border-left-color: #bbb; }

.sheetbar { display: flex; align-items: center; height: 27px; flex: none; }
.nav { width: 28px; }
.nav:first-child { margin-left: 15px; }
.sheet-tab { align-self: flex-start; width: 89px; height: 25px; margin: -1px 0 0 29px; background: #fff; border: 1px solid #999; border-top: 0; border-bottom: 2px solid #217346; color: #217346; font-size: 13px; font-feature-settings: normal; position: relative; }
.add { margin-left: 33px; }
.hscroll { display: flex; align-items: center; margin-left: auto; width: 547px; padding-right: 19px; }
.hscroll .dots { margin: 0 15px 0 0; }
.htrack { flex: 1; height: 15px; background: #dadada; margin-right: 2px; }
.hthumb { width: 82%; height: 15px; background: #fff; border: 1px solid #ababab; }

.status { display: flex; align-items: center; height: 22px; padding: 0 8px; border-top: 1px solid #c6c6c6; background: #f2f2f2; flex: none; color: #444; }
.macro { margin-left: 19px; }
.views { display: flex; margin-left: auto; height: 21px; }
.views button { width: 38px; height: 21px; }
.zoom-btn { width: 16px; }
.zoom { appearance: none; width: 98px; height: 12px; margin: 0; background: linear-gradient(#aaa, #aaa) center / 100% 1px no-repeat; }
.zoom::-webkit-slider-thumb { appearance: none; width: 5px; height: 11px; background: #666; }
.pct-label { width: 40px; text-align: right; font-family: "Open Sans", sans-serif; }
```
